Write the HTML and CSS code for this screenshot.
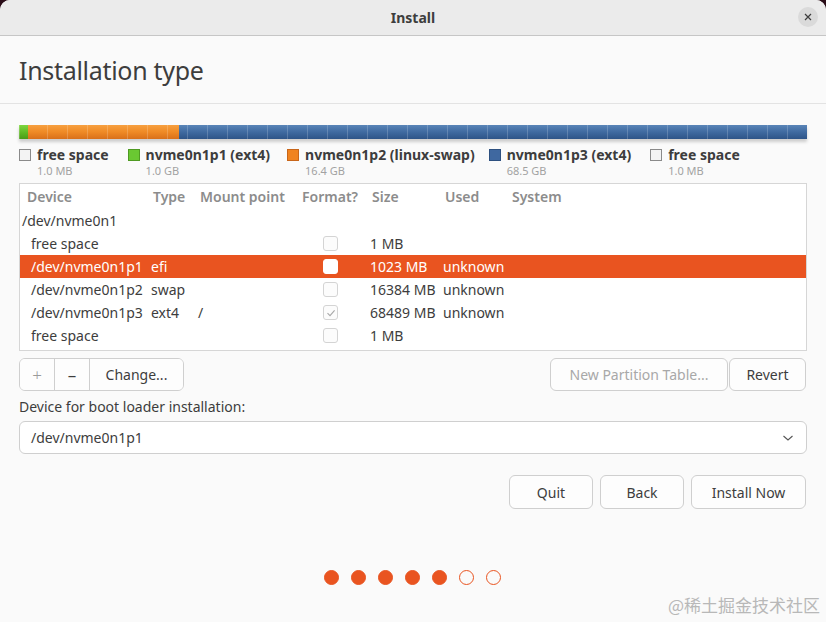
FILE: index.html
```html
<!DOCTYPE html>
<html>
<head>
<meta charset="utf-8">
<link rel="stylesheet" href="styles.css">
</head>
<body>
<div class="window">
  <div class="titlebar">
    <span class="title">Install</span>
    <span class="close"><svg width="10" height="10" viewBox="0 0 10 10"><path d="M2 2 L8 8 M8 2 L2 8" stroke="#3d3d3d" stroke-width="1.2" fill="none"/></svg></span>
  </div>
  <div class="header">
    <h1>Installation type</h1>
  </div>
  <div class="content">
    <div class="pbar">
      <div class="seg green" style="width:9px"></div>
      <div class="seg orange" style="width:151px"></div>
      <div class="seg blue"></div>
    </div>
    <div class="legend">
      <div class="li"><span class="sq sq-free"></span><div><div class="ln">free space</div><div class="ls">1.0 MB</div></div></div>
      <div class="li"><span class="sq sq-green"></span><div><div class="ln">nvme0n1p1 (ext4)</div><div class="ls">1.0 GB</div></div></div>
      <div class="li"><span class="sq sq-orange"></span><div><div class="ln">nvme0n1p2 (linux-swap)</div><div class="ls">16.4 GB</div></div></div>
      <div class="li"><span class="sq sq-blue"></span><div><div class="ln">nvme0n1p3 (ext4)</div><div class="ls">68.5 GB</div></div></div>
      <div class="li"><span class="sq sq-free"></span><div><div class="ln">free space</div><div class="ls">1.0 MB</div></div></div>
    </div>
    <div class="table">
      <div class="row head">
        <span class="c dev">Device</span><span class="c">Type</span><span class="c">Mount point</span><span class="c">Format?</span><span class="c">Size</span><span class="c">Used</span><span class="c">System</span>
      </div>
      <div class="row"><span class="c disk">/dev/nvme0n1</span></div>
      <div class="row">
        <span class="c d">free space</span><span class="c"></span><span class="c"></span><span class="c fmt"><span class="cb"></span></span><span class="c">1 MB</span><span class="c"></span><span class="c"></span>
      </div>
      <div class="row sel">
        <span class="c d">/dev/nvme0n1p1</span><span class="c">efi</span><span class="c"></span><span class="c fmt"><span class="cb cb-sel"></span></span><span class="c">1023 MB</span><span class="c">unknown</span><span class="c"></span>
      </div>
      <div class="row">
        <span class="c d">/dev/nvme0n1p2</span><span class="c">swap</span><span class="c"></span><span class="c fmt"><span class="cb"></span></span><span class="c">16384 MB</span><span class="c">unknown</span><span class="c"></span>
      </div>
      <div class="row">
        <span class="c d">/dev/nvme0n1p3</span><span class="c">ext4</span><span class="c">/</span><span class="c fmt"><span class="cb"><svg width="12" height="12" viewBox="0 0 12 12"><path d="M2.5 6.2 L5 8.6 L9.6 3.4" stroke="#a8a8a8" stroke-width="1.1" fill="none"/></svg></span></span><span class="c">68489 MB</span><span class="c">unknown</span><span class="c"></span>
      </div>
      <div class="row">
        <span class="c d">free space</span><span class="c"></span><span class="c"></span><span class="c fmt"><span class="cb"></span></span><span class="c">1 MB</span><span class="c"></span><span class="c"></span>
      </div>
    </div>
    <div class="tools">
      <div class="group">
        <button class="btn sq-btn plus">+</button>
        <button class="btn sq-btn">&#8211;</button>
        <button class="btn change">Change...</button>
      </div>
      <div class="right-tools">
        <button class="btn disabled npt">New Partition Table...</button>
        <button class="btn revert">Revert</button>
      </div>
    </div>
    <div class="label">Device for boot loader installation:</div>
    <div class="select">
      <span>/dev/nvme0n1p1</span>
      <svg width="12" height="8" viewBox="0 0 12 8"><path d="M1.5 2 L6 6 L10.5 2" stroke="#555" stroke-width="1.1" fill="none"/></svg>
    </div>
    <div class="actions">
      <button class="btn act quit">Quit</button>
      <button class="btn act back">Back</button>
      <button class="btn act install">Install Now</button>
    </div>
    <div class="dots">
      <span class="dot on"></span><span class="dot on"></span><span class="dot on"></span><span class="dot on"></span><span class="dot on"></span><span class="dot"></span><span class="dot"></span>
    </div>
    <div class="watermark">@稀土掘金技术社区</div>
  </div>
</div>
</body>
</html>
```
FILE: styles.css
```css
* { box-sizing: border-box; }
html, body { margin: 0; padding: 0; }
body {
  width: 826px;
  height: 622px;
  background: #2a0d18;
  font-family: "Noto Sans", "Open Sans", sans-serif;
  color: #3d3d3d;
  overflow: hidden;
}
.window {
  width: 826px;
  height: 622px;
  background: #fafafa;
  border-radius: 10px 10px 0 0;
  overflow: hidden;
  display: flex;
  flex-direction: column;
}
.titlebar {
  height: 36px;
  background: #ebebeb;
  border-bottom: 1px solid #c6c6c6;
  display: flex;
  align-items: center;
  justify-content: center;
  position: relative;
  flex-shrink: 0;
}
.title {
  font-weight: 700;
  font-size: 14px;
  color: #3d3d3d;
}
.close {
  position: absolute;
  right: 8px;
  top: 7px;
  width: 20px;
  height: 20px;
  border-radius: 50%;
  background: #dadada;
  display: flex;
  align-items: center;
  justify-content: center;
}
.header {
  height: 68px;
  border-bottom: 1px solid #e3e3e3;
  display: flex;
  align-items: center;
  padding-left: 19px;
  flex-shrink: 0;
}
.header h1 {
  margin: 0;
  font-weight: 400;
  font-size: 25px;
  color: #3d3d3d;
  letter-spacing: -0.3px;
}
.content {
  padding: 21px 20px 0 19px;
  display: flex;
  flex-direction: column;
  flex: 1;
  position: relative;
}
.pbar {
  height: 14px;
  display: flex;
  box-shadow: 0 3px 3px rgba(0,0,0,0.18);
  position: relative;
  margin-right: -1px;
}
.pbar::after {
  content: "";
  position: absolute;
  inset: 0;
  background: repeating-linear-gradient(90deg, transparent 0, transparent 19px, rgba(255,255,255,0.18) 19px, rgba(255,255,255,0.18) 20px);
  background-position: 9px 0;
}
.seg { height: 100%; }
.green { background: linear-gradient(#7ed63f, #5bb521 60%, #4a9a18); }
.orange { background: linear-gradient(#f7a040, #ef8a25 50%, #d9701a); }
.blue { flex: 1; background: linear-gradient(#5a85b8, #3f6aa0 50%, #2d5488); }
.legend {
  display: flex;
  gap: 17px;
  margin-top: 6px;
  height: 38px;
}
.li {
  display: flex;
  gap: 6px;
  align-items: flex-start;
}
.li:nth-child(2) { margin-left: 2px; }
.li:nth-child(4) { margin-left: -3px; }
.li:nth-child(5) { margin-left: 2px; }
.sq {
  width: 12px;
  height: 12px;
  margin-top: 4px;
  flex-shrink: 0;
}
.sq-free { background: #f3f3f3; border: 1px solid #8a8a8a; }
.sq-green { background: #6ac832; border: 1px solid #4f9a22; }
.sq-orange { background: #f08320; border: 1px solid #c8661a; }
.sq-blue { background: #3f68a0; border: 1px solid #2d5080; }
.ln {
  font-weight: 700;
  font-size: 14px;
  line-height: 19px;
  color: #3d3d3d;
}
.ls {
  font-size: 11px;
  line-height: 14px;
  color: #a2a2a2;
}
.table {
  border: 1px solid #d6d6d6;
  background: #ffffff;
  height: 168px;
  margin-right: -1px;
}
.row {
  display: grid;
  grid-template-columns: 131px 47px 102px 70px 73px 67px 1fr;
  height: 23px;
  align-items: center;
  font-size: 14px;
  color: #3d3d3d;
}
.row.head {
  height: 25px;
  color: #8c8c8c;
  font-weight: 600;
}
.row.head .c { padding-left: 2px; }
.row.head .c.dev { padding-left: 7px; }
.c { white-space: nowrap; }
.c.disk { padding-left: 2px; grid-column: 1 / 3; }
.c.d { padding-left: 11px; }
.row.sel { background: #e95420; color: #ffffff; }
.fmt { padding-left: 23px; display: flex; align-items: center; }
.cb {
  width: 15px;
  height: 15px;
  border: 1px solid #d4d4d4;
  border-radius: 3px;
  background: #fcfcfc;
  display: flex;
  align-items: center;
  justify-content: center;
}
.cb-sel { border-color: #ffffff; background: #ffffff; }
.tools {
  display: flex;
  justify-content: space-between;
  margin-top: 7px;
}
.group {
  display: flex;
  border: 1px solid #cfcfcf;
  border-radius: 6px;
  overflow: hidden;
  height: 33px;
}
.btn {
  font-family: "Noto Sans", "Open Sans", sans-serif;
  font-size: 14px;
  color: #3d3d3d;
  background: #fdfdfd;
  border: 1px solid #cfcfcf;
  border-radius: 6px;
  height: 33px;
  padding: 0;
  display: flex;
  align-items: center;
  justify-content: center;
}
.group .btn {
  border: none;
  border-radius: 0;
  height: 31px;
}
.sq-btn {
  width: 35px;
  border-right: 1px solid #cfcfcf !important;
  font-size: 17px;
}
.plus { color: #9a9a9a; font-weight: 300; }
.change { width: 93px; }
.right-tools { display: flex; gap: 1px; }
.npt { width: 178px; color: #a8a8a8; }
.revert { width: 77px; }
.label {
  font-size: 14px;
  margin-top: 7px;
  line-height: 18px;
  color: #3d3d3d;
}
.select {
  margin-top: 5px;
  margin-right: -1px;
  height: 33px;
  border: 1px solid #cfcfcf;
  border-radius: 6px;
  background: #ffffff;
  display: flex;
  align-items: center;
  justify-content: space-between;
  padding: 0 12px 0 11px;
  font-size: 14px;
}
.actions {
  display: flex;
  justify-content: flex-end;
  gap: 7px;
  margin-top: 21px;
}
.act { height: 34px; }
.quit { width: 84px; }
.back { width: 84px; }
.install { width: 115px; }
.dots {
  display: flex;
  justify-content: center;
  gap: 12px;
  margin-top: 61px;
}
.dot {
  width: 15px;
  height: 15px;
  border-radius: 50%;
  border: 1.5px solid #e95420;
}
.dot.on { background: #e95420; }
.watermark {
  position: absolute;
  right: 6px;
  bottom: 5px;
  font-family: "Noto Sans CJK SC", sans-serif;
  font-size: 17px;
  color: #b8b8b8;
}
```
